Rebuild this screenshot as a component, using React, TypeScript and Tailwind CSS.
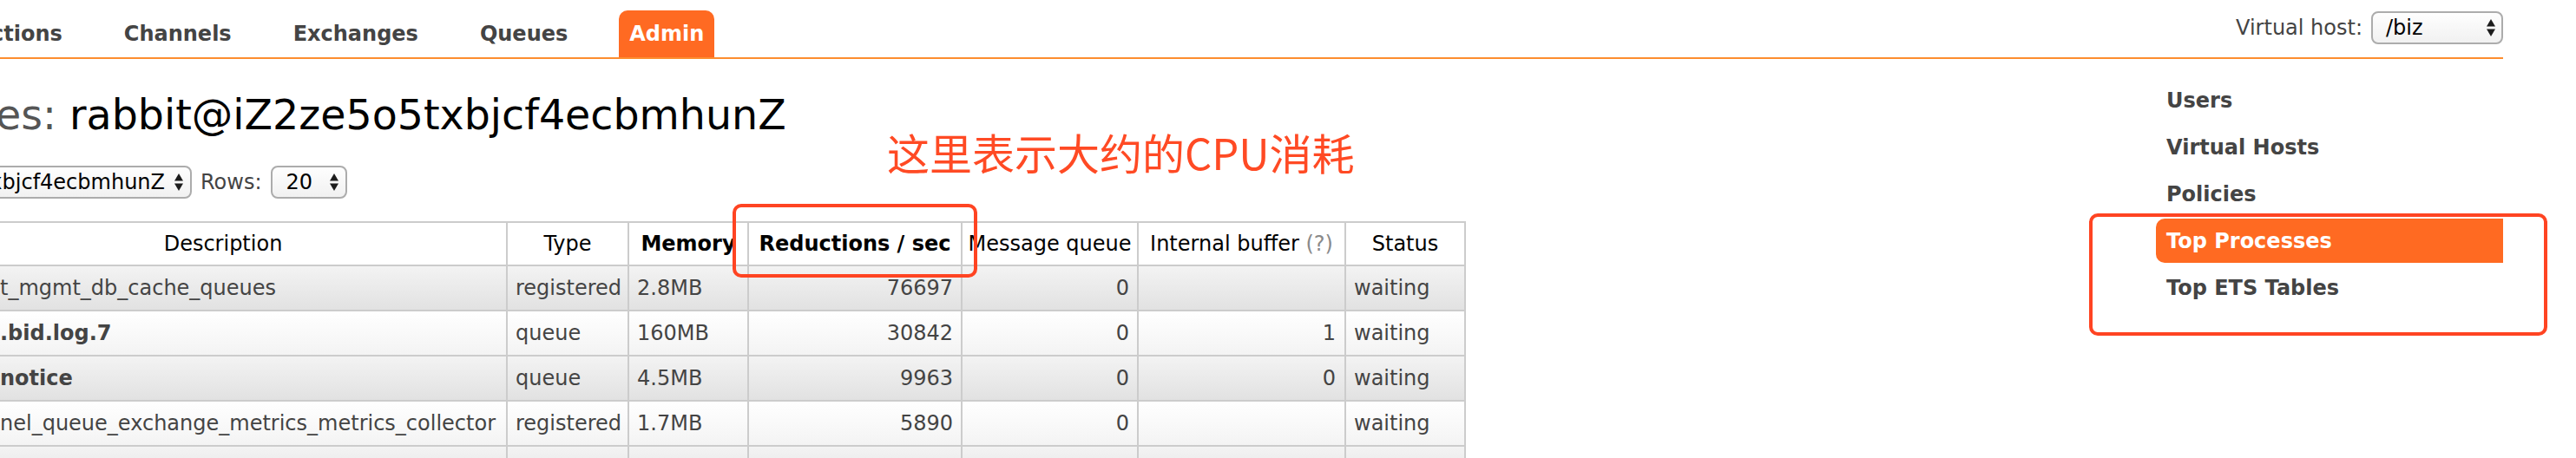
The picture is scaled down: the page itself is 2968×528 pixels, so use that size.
import React from "react";

function Arrows() {
  return (
    <svg width="10" height="20" viewBox="0 0 10 20" className="shrink-0">
      <path d="M0 8.5 L5 0 L10 8.5 Z" fill="#1c1c1c" />
      <path d="M0 11.5 L10 11.5 L5 20 Z" fill="#1c1c1c" />
    </svg>
  );
}

const selectBox =
  "h-[38px] rounded-[8px] border-2 border-[#acacac] bg-linear-to-b from-[#fefefe] to-[#f1f1f1] flex items-center text-[24px] text-black overflow-hidden";

type Row = {
  d: string;
  bold: boolean;
  type: string;
  mem: string;
  red: string;
  mq: string;
  ib: string;
  st: string;
};

const rows: Row[] = [
  { d: "t_mgmt_db_cache_queues", bold: false, type: "registered", mem: "2.8MB", red: "76697", mq: "0", ib: "", st: "waiting" },
  { d: ".bid.log.7", bold: true, type: "queue", mem: "160MB", red: "30842", mq: "0", ib: "1", st: "waiting" },
  { d: "notice", bold: true, type: "queue", mem: "4.5MB", red: "9963", mq: "0", ib: "0", st: "waiting" },
  { d: "nel_queue_exchange_metrics_metrics_collector", bold: false, type: "registered", mem: "1.7MB", red: "5890", mq: "0", ib: "", st: "waiting" },
];

const th = "border-t-2 border-b-2 border-r-2 border-[#cccccc] px-[2px] text-center font-normal text-black whitespace-nowrap";
const td = "border-b-2 border-r-2 border-[#cccccc] whitespace-nowrap text-[#444]";

export default function App() {
  return (
    <div className="relative w-[2968px] h-[528px] overflow-hidden bg-white font-['DejaVu_Sans',sans-serif] text-[24px]">
      <div className="w-[2884px]">
        {/* top menu */}
        <div className="flex justify-between h-[68px] border-b-2 border-[#fd8d2f]">
          <div className="flex items-end h-full -ml-[22px] gap-[47px]">
            {["ctions", "Channels", "Exchanges", "Queues"].map((t) => (
              <div key={t} className="h-[54px] px-3 flex items-center font-bold text-[#444] whitespace-nowrap">
                {t}
              </div>
            ))}
            <div className="h-[54px] px-3 flex items-center rounded-t-[10px] bg-[#ff6a22] text-white font-bold">
              Admin
            </div>
          </div>
          <div className="self-start mt-[13px] flex items-center gap-[10px]">
            <span className="text-[#444] whitespace-nowrap">Virtual host:</span>
            <div className={selectBox + " w-[152px] pl-[15px] pr-[7px] justify-between"}>
              <span>/biz</span>
              <Arrows />
            </div>
          </div>
        </div>

        <div className="flex">
          {/* main */}
          <div className="flex-1 flex flex-col">
            <div className="mt-[37px] h-[56px] leading-[56px] text-[47.5px] -ml-[5px] whitespace-nowrap">
              <span className="text-[#555]">es: </span>
              <span className="text-black">rabbit@iZ2ze5o5txbjcf4ecbmhunZ</span>
            </div>
            <div className="mt-[30px] flex items-center">
              <div className={selectBox + " w-[241px] -ml-[20px] justify-end pr-[8px]"}>
                <span className="whitespace-nowrap">rabbit@iZ2ze5o5txbjcf4ecbmhunZ</span>
                <span className="ml-[11px] flex">
                  <Arrows />
                </span>
              </div>
              <span className="ml-[10px] text-[#444]">Rows:</span>
              <div className={selectBox + " ml-[10px] w-[88px] pl-[16px] pr-[8px] justify-between"}>
                <span>20</span>
                <Arrows />
              </div>
            </div>
            <table className="mt-[26px] table-fixed border-separate border-spacing-0 w-[1689px]">
              <colgroup>
                <col className="w-[585px]" />
                <col className="w-[140px]" />
                <col className="w-[138px]" />
                <col className="w-[246px]" />
                <col className="w-[203px]" />
                <col className="w-[239px]" />
                <col className="w-[138px]" />
              </colgroup>
              <thead>
                <tr className="h-[52px] bg-white">
                  <th className={th + " pr-[71px]"}>Description</th>
                  <th className={th}>Type</th>
                  <th className={th + " !font-bold"}>Memory</th>
                  <th className={th + " !font-bold"}>Reductions / sec</th>
                  <th className={th}>Message queue</th>
                  <th className={th}>
                    Internal buffer <span className="text-[#8a8a8a]">(?)</span>
                  </th>
                  <th className={th}>Status</th>
                </tr>
              </thead>
              <tbody>
                {rows.map((r, i) => (
                  <tr
                    key={i}
                    className={
                      "h-[52px] " +
                      (i % 2 === 0
                        ? "bg-linear-to-b from-[#f3f3f3] to-[#e1e1e1]"
                        : "bg-linear-to-b from-[#ffffff] to-[#f3f3f3]")
                    }
                  >
                    <td className={td + (r.bold ? " font-bold text-[#222]" : "")}>{r.d}</td>
                    <td className={td + " pl-[9px]"}>{r.type}</td>
                    <td className={td + " pl-[9px]"}>{r.mem}</td>
                    <td className={td + " pr-[9px] text-right"}>{r.red}</td>
                    <td className={td + " pr-[9px] text-right"}>{r.mq}</td>
                    <td className={td + " pr-[10px] text-right"}>{r.ib}</td>
                    <td className={td + " pl-[9px]"}>{r.st}</td>
                  </tr>
                ))}
                <tr className="h-[52px] bg-linear-to-b from-[#f3f3f3] to-[#e1e1e1]">
                  <td className={td}></td>
                  <td className={td}></td>
                  <td className={td}></td>
                  <td className={td}></td>
                  <td className={td}></td>
                  <td className={td}></td>
                  <td className={td}></td>
                </tr>
              </tbody>
            </table>
          </div>

          {/* sidebar */}
          <div className="w-[400px] pt-[22px] flex flex-col gap-[3px]">
            {["Users", "Virtual Hosts", "Policies", "Top Processes", "Top ETS Tables"].map((t) => (
              <div
                key={t}
                className={
                  "h-[51px] pl-3 flex items-center font-bold whitespace-nowrap " +
                  (t === "Top Processes" ? "bg-[#ff6a22] text-white rounded-l-[10px]" : "text-[#444]")
                }
              >
                {t}
              </div>
            ))}
          </div>
        </div>
      </div>

      {/* annotations */}
      <div className="absolute left-[1022px] top-[150px] text-[49px] leading-none text-[#ff4a24] whitespace-nowrap font-['Noto_Sans_CJK_SC',sans-serif]">
        这里表示大约的CPU消耗
      </div>
      <div className="absolute left-[844px] top-[235px] w-[282px] h-[85px] border-4 border-[#ff4422] rounded-[10px]"></div>
      <div className="absolute left-[2407px] top-[246px] w-[528px] h-[141px] border-4 border-[#ff4422] rounded-[10px]"></div>
    </div>
  );
}
